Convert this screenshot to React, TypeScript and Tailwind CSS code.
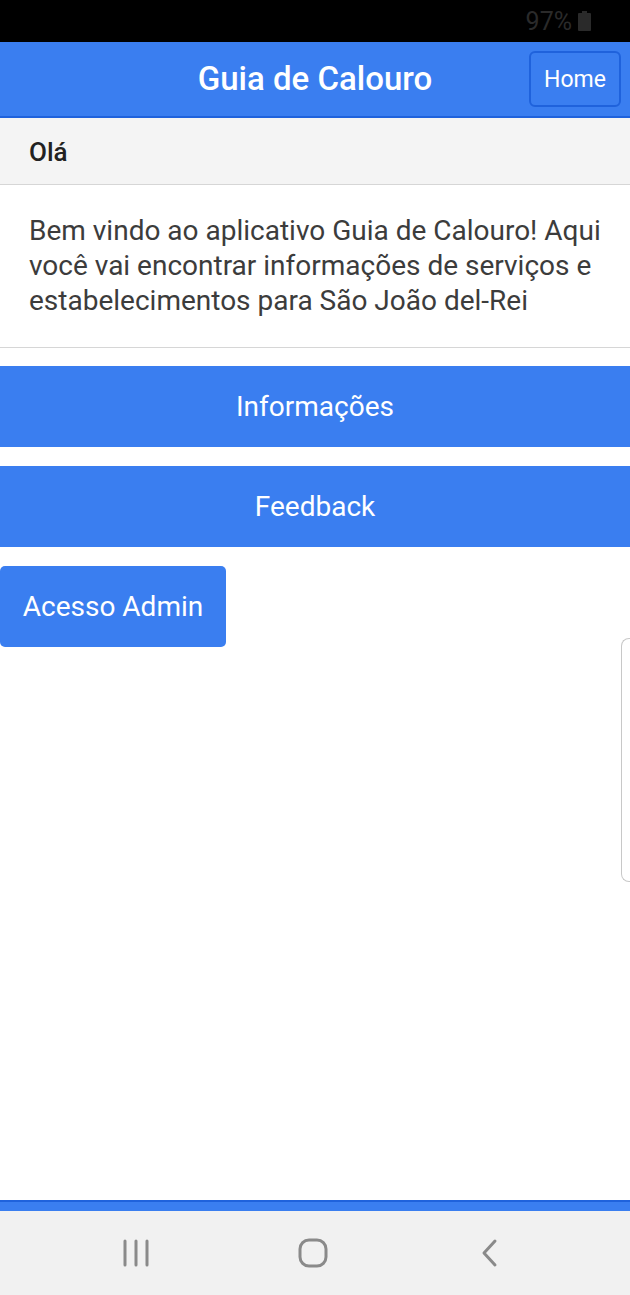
import React from 'react';

const BLUE = 'bg-[#3a7ef0]';

// Android status bar with battery readout
const StatusBar: React.FC = () => (
  <div className="h-[42px] bg-black flex items-center justify-end pr-[39px] gap-[6px] shrink-0">
    <span className="text-[25px] text-[#2a2a2a] leading-none">97%</span>
    <svg width="13" height="20" viewBox="0 0 13 20">
      <rect x="4" y="0" width="5" height="2" fill="#2a2a2a" />
      <rect x="0" y="2" width="13" height="18" rx="1" fill="#2a2a2a" />
    </svg>
  </div>
);

const AppHeader: React.FC = () => (
  <div className={`h-[76px] ${BLUE} border-b-2 border-[#1f62dc] relative flex items-center justify-center shrink-0`}>
    <h1 className="text-[33px] font-medium text-white">Guia de Calouro</h1>
    <button className="absolute right-[9px] top-[9px] w-[92px] h-[56px] rounded-[6px] border-2 border-[#1f62dc] text-white text-[23px] pt-[2px]">
      Home
    </button>
  </div>
);

const NavBar: React.FC = () => (
  <div className="h-[84px] bg-[#f1f1f1] flex items-center justify-center gap-[146px] pr-[5px] shrink-0">
    <svg width="30" height="30" viewBox="0 0 30 30">
      <path d="M3 3v24M14 3v24M25 3v24" stroke="#8a8a8a" strokeWidth="3" strokeLinecap="round" />
    </svg>
    <svg width="30" height="30" viewBox="0 0 30 30">
      <rect x="2" y="2" width="26" height="26" rx="9" fill="none" stroke="#8a8a8a" strokeWidth="3" />
    </svg>
    <svg width="30" height="30" viewBox="0 0 30 30">
      <path d="M21 3L10 15l11 12" fill="none" stroke="#8a8a8a" strokeWidth="3" strokeLinecap="round" strokeLinejoin="round" />
    </svg>
  </div>
);

export default function App() {
  return (
    <div className="h-[1295px] w-[630px] flex flex-col bg-white overflow-hidden relative font-['Roboto',sans-serif]">
      <StatusBar />
      <AppHeader />

      <div className="flex-1 flex flex-col">
        <div className="h-[67px] bg-[#f4f4f4] border-b border-[#d6d6d6] flex items-center px-[29px] pt-[3px]">
          <span className="text-[26px] font-medium text-[#222]">Olá</span>
        </div>
        <div className="px-[29px] pt-[28px] pb-[29px] border-b border-[#d6d6d6]">
          <p className="text-[28px] leading-[35px] text-[#3c3c3c]">
            Bem vindo ao aplicativo Guia de Calouro! Aqui você vai encontrar informações de serviços e estabelecimentos para São João del-Rei
          </p>
        </div>

        <div className="flex flex-col gap-[19px] mt-[18px]">
          <button className={`h-[81px] w-full ${BLUE} text-white text-[28px]`}>Informações</button>
          <button className={`h-[81px] w-full ${BLUE} text-white text-[28px]`}>Feedback</button>
          <div>
            <button className={`h-[81px] w-[226px] ${BLUE} rounded-[5px] text-white text-[28px]`}>Acesso Admin</button>
          </div>
        </div>
      </div>

      {/* edge panel handle */}
      <div className="absolute right-0 top-[638px] w-[9px] h-[244px] rounded-l-[8px] border border-r-0 border-[#c8c8c8]" />

      <div className="h-[11px] bg-[#3a7ef0] border-t-2 border-[#1f62dc] shrink-0" />
      <NavBar />
    </div>
  );
}
